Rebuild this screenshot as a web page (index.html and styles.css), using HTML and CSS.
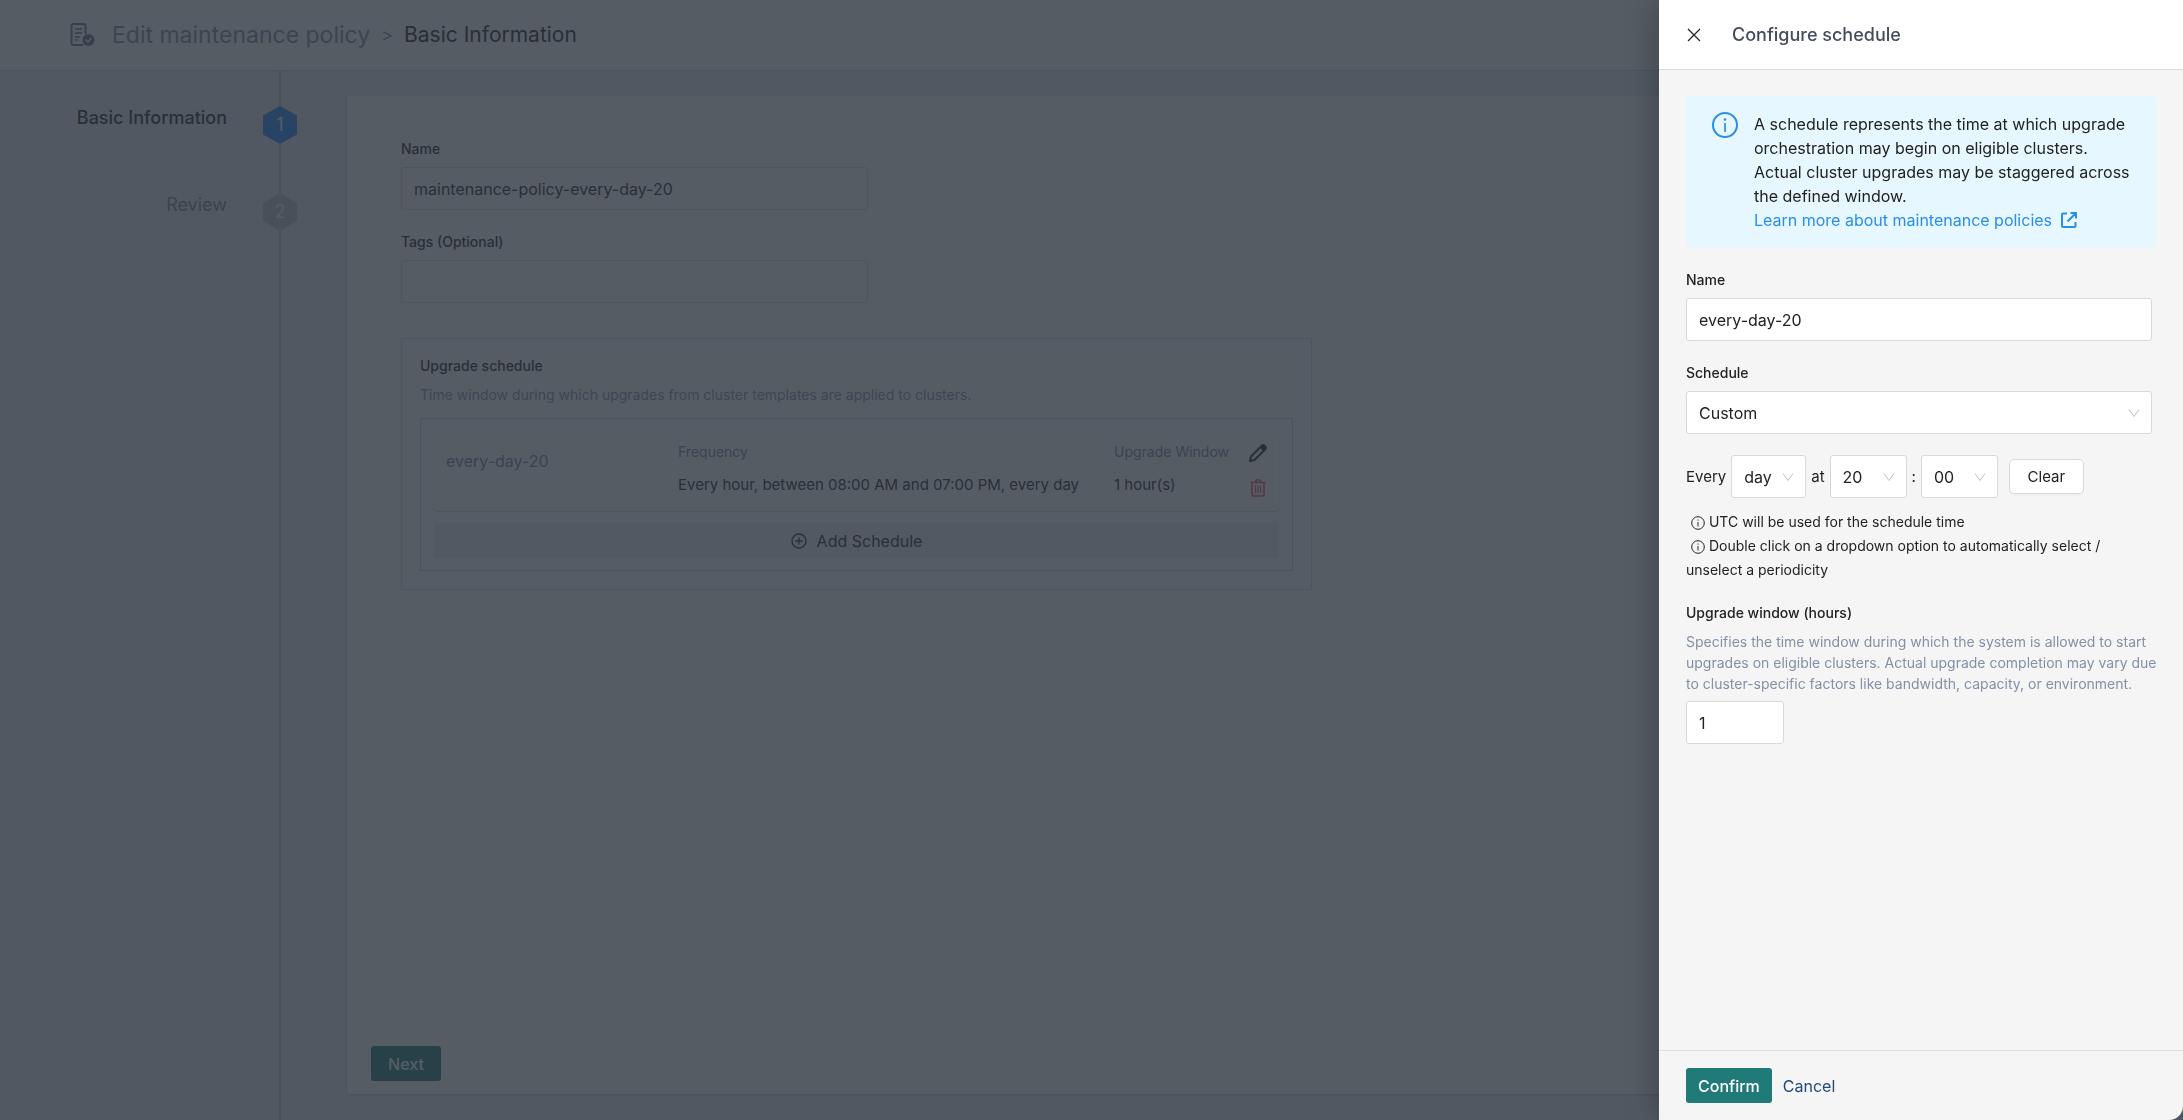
FILE: index.html
```
<!DOCTYPE html>
<html lang="en">
<head>
	<meta charset="utf-8">
	<title>Edit maintenance policy</title>
	<link rel="stylesheet" href="styles.css">
</head>
<body>
	<div class="page">
		<header class="topbar">
			<svg class="topbar-icon" viewBox="0 0 24 24" fill="none" stroke="currentColor" stroke-width="2" stroke-linecap="round" stroke-linejoin="round">
				<path d="M12 22H3a2 2 0 0 1-2-2V3a2 2 0 0 1 2-2h10a2 2 0 0 1 2 2v7"/>
				<path d="M5 6h6M5 10h6M5 14h4M5 17h2" stroke-width="1.6"/>
				<circle cx="18" cy="17" r="6" fill="currentColor" stroke="none"/>
				<path d="M15.500 17l2 2 3-3.500" class="icon-check"/>
			</svg>
			<h1 class="crumb">Edit maintenance policy</h1>
			<span class="crumb-sep">&gt;</span>
			<span class="crumb-current">Basic Information</span>
		</header>

		<div class="content">
			<ol class="steps">
				<li class="step active">
					<span class="step-name">Basic Information</span>
					<span class="step-hex">1</span>
				</li>
				<li class="step">
					<span class="step-name">Review</span>
					<span class="step-hex">2</span>
				</li>
			</ol>

			<main class="panel">
				<form class="policy-form">
					<div class="field">
						<label for="policy-name">Name</label>
						<input id="policy-name" class="text-input" type="text" value="maintenance-policy-every-day-20">
					</div>
					<div class="field">
						<label for="policy-tags">Tags (Optional)</label>
						<input id="policy-tags" class="text-input" type="text">
					</div>

					<section class="upgrade">
						<h2>Upgrade schedule</h2>
						<p class="hint">Time window during which upgrades from cluster templates are applied to clusters.</p>
						<div class="schedules">
							<div class="schedule-card">
								<div class="schedule-name">every-day-20</div>
								<div class="schedule-col">
									<span class="col-label">Frequency</span>
									<span>Every hour, between 08:00 AM and 07:00 PM, every day</span>
								</div>
								<div class="schedule-col">
									<span class="col-label">Upgrade Window</span>
									<span>1 hour(s)</span>
								</div>
								<div class="schedule-actions">
									<button type="button" class="icon-btn" aria-label="Edit">
										<svg viewBox="0 0 18 18" fill="none" stroke="currentColor" stroke-width="2" stroke-linejoin="round">
											<path d="M1 17l1-4.500L13 1.500q1.200-1 2.500.300l.700.700q1.200 1.200.200 2.500L5.500 16z"/>
											<path d="M11 3.500l2-2q1.500-1 2.800.400t.700 3l-2 2z" fill="currentColor" stroke-width="1"/>
										</svg>
									</button>
									<button type="button" class="icon-btn danger" aria-label="Delete">
										<svg viewBox="0 0 18 18" fill="none" stroke="currentColor" stroke-width="1.600" stroke-linecap="round" stroke-linejoin="round">
											<path d="M2 3.500h14M6 3.500l1-2.500h4l1 2.500M3 3.500V15a2 2 0 0 0 2 2h8a2 2 0 0 0 2-2V3.500"/>
											<path d="M6.500 7v6.500M9 7v6.500M11.500 7v6.500" stroke-width="1.200"/>
										</svg>
									</button>
								</div>
							</div>
							<button type="button" class="add-btn">
								<svg viewBox="0 0 16 16" fill="none" stroke="currentColor" stroke-width="1.300" stroke-linecap="round">
									<circle cx="8" cy="8" r="7"/>
									<path d="M8 5v6M5 8h6"/>
								</svg>
								Add Schedule
							</button>
						</div>
					</section>
				</form>
				<button type="button" class="btn-primary next">Next</button>
			</main>
		</div>
	</div>

	<div class="mask"></div>

	<aside class="drawer">
		<header class="drawer-header">
			<button type="button" class="close-btn" aria-label="Close">
				<svg viewBox="0 0 14 14" fill="none" stroke="currentColor" stroke-width="1.200">
					<path d="M1 1l12 12M13 1L1 13"/>
				</svg>
			</button>
			<h2>Configure schedule</h2>
		</header>

		<form class="drawer-body">
			<div class="alert">
				<svg class="alert-icon" viewBox="0 0 26 26" fill="none" stroke="currentColor" stroke-width="2">
					<circle cx="13" cy="13" r="12"/>
					<path d="M13 11v9" stroke-width="1.700"/>
					<circle cx="13" cy="7.500" r="1.300" fill="currentColor" stroke="none"/>
				</svg>
				<div>
					<p>A schedule represents the time at which upgrade<br>orchestration may begin on eligible clusters.<br>Actual cluster upgrades may be staggered across<br>the defined window.</p>
					<a href="#">Learn more about maintenance policies
						<svg viewBox="0 0 16 16" fill="none" stroke="currentColor" stroke-width="2">
							<path d="M6 1.500H2a1 1 0 0 0-1 1V14a1 1 0 0 0 1 1h11.500a1 1 0 0 0 1-1v-4M9.500 1H15v5.500M15 1L6.500 9.500"/>
						</svg>
					</a>
				</div>
			</div>

			<div class="field">
				<label for="schedule-name">Name</label>
				<input id="schedule-name" class="text-input" type="text" value="every-day-20">
			</div>
			<div class="field">
				<label for="schedule-type">Schedule</label>
				<span class="select-wrap">
					<select id="schedule-type"><option>Custom</option></select>
					<svg viewBox="0 0 12 8"><path d="M1 .500l5 7 5-7"/></svg>
				</span>
			</div>

			<div class="cron">
				<label for="period">Every</label>
				<span class="select-wrap period">
					<select id="period"><option>day</option></select>
					<svg viewBox="0 0 12 8"><path d="M1 .500l5 7 5-7"/></svg>
				</span>
				<label for="hour">at</label>
				<span class="select-wrap">
					<select id="hour"><option>20</option></select>
					<svg viewBox="0 0 12 8"><path d="M1 .500l5 7 5-7"/></svg>
				</span>
				<label for="minute">:</label>
				<span class="select-wrap">
					<select id="minute"><option>00</option></select>
					<svg viewBox="0 0 12 8"><path d="M1 .500l5 7 5-7"/></svg>
				</span>
				<button type="button" class="clear-btn">Clear</button>
			</div>

			<div class="notes">
				<p>
					<svg viewBox="0 0 14 14" fill="none" stroke="currentColor"><circle cx="7" cy="7" r="6.300"/><path d="M7 6v4.500M7 3.500v1.200"/></svg>
					UTC will be used for the schedule time
				</p>
				<p>
					<svg viewBox="0 0 14 14" fill="none" stroke="currentColor"><circle cx="7" cy="7" r="6.300"/><path d="M7 6v4.500M7 3.500v1.200"/></svg>
					Double click on a dropdown option to automatically select /<br>unselect a periodicity
				</p>
			</div>

			<div class="field window-field">
				<label for="window-hours">Upgrade window (hours)</label>
				<p class="hint">Specifies the time window during which the system is allowed to start<br>upgrades on eligible clusters. Actual upgrade completion may vary due<br>to cluster-specific factors like bandwidth, capacity, or environment.</p>
				<input id="window-hours" class="text-input" type="text" value="1">
			</div>
		</form>

		<footer class="drawer-footer">
			<button type="button" class="btn-primary">Confirm</button>
			<button type="button" class="btn-link">Cancel</button>
		</footer>
	</aside>
</body>
</html>
```
FILE: styles.css
```
*{
	box-sizing:border-box;
}
body,html{
	height:100%;
	margin:0;
}
body{
	background:#000;
	color:#222;
	font-family:Inter, "Open Sans", sans-serif;
	font-size:16px;
	line-height:24px;
	overflow:hidden;
}
h1,h2,p,ol{
	margin:0;
	padding:0;
	font-weight:400;
}
button,input,select{
	font:inherit;
	color:inherit;
}
button{
	cursor:pointer;
}
svg{
	flex:none;
}

/* page behind the drawer */
.page{
	display:flex;
	flex-direction:column;
	height:100%;
	background:#eaecf5;
}
.topbar{
	display:flex;
	align-items:center;
	height:71px;
	padding:0 70px;
	background:#fff;
	border-bottom:1px solid #d4d6dc;
}
.topbar-icon{
	width:25px;
	height:24px;
	margin-right:17px;
	color:#667085;
}
.icon-check{
	stroke:#fff;
	stroke-width:1.5;
}
.crumb{
	color:#7f88a0;
	font-size:23px;
}
.crumb-sep{
	margin:0 11px;
	color:#7f88a0;
	font-size:18px;
}
.crumb-current{
	font-size:21px;
}
.content{
	display:flex;
	flex:1;
}
.steps{
	position:relative;
	width:347px;
	padding-top:35px;
	list-style:none;
}
.steps:before{
	content:"";
	position:absolute;
	top:0;
	bottom:0;
	left:279px;
	width:2px;
	background:#c3c7d2;
}
.step{
	position:relative;
	display:flex;
	justify-content:flex-end;
	height:87px;
	padding-right:50px;
	color:#7d8086;
}
.step.active{
	color:#222;
}
.step-name{
	margin-right:36px;
	font-size:18px;
}
.active .step-name{
	font-weight:500;
}
.step-hex{
	width:34px;
	height:38px;
	background:#bfc3ca;
	clip-path:polygon(50% 0, 100% 25%, 100% 75%, 50% 100%, 0 75%, 0 25%);
	color:#fff;
	font-size:18px;
	line-height:38px;
	text-align:center;
}
.active .step-hex{
	background:#2080ff;
}
.panel{
	display:flex;
	flex-direction:column;
	flex:1;
	margin:25px 26px 26px 0;
	padding:41px 24px 13px;
	background:#fff;
	box-shadow:0 1px 2px rgba(0,0,0,.2);
}
.policy-form{
	width:941px;
	padding-left:30px;
}
.field{
	margin-bottom:20px;
}
.policy-form .field{
	width:497px;
	max-width:467px;
}
.field label,.upgrade h2{
	display:block;
	margin-bottom:6px;
	font-size:14px;
	font-weight:500;
}
.text-input,.select-wrap select{
	width:100%;
	height:43px;
	padding:0 12px;
	background:#fff;
	border:1px solid #d9d9d9;
	border-radius:3px;
}
.hint{
	color:#8490a6;
	font-size:14px;
	line-height:21px;
}
.upgrade{
	margin-top:35px;
	padding:15px 18px 18px;
	border:1px solid #d9d9e3;
}
.upgrade .hint{
	margin-bottom:13px;
}
.schedules{
	padding:12px 13px;
	border:1px solid #cfd2e0;
}
.schedule-card{
	display:flex;
	height:80px;
	margin-bottom:12px;
	padding:9px 12px;
	border-radius:4px;
	box-shadow:0 1px 2px rgba(0,0,0,.2);
}
.schedule-name{
	width:232px;
	padding-top:9px;
	color:#7481a0;
}
.schedule-col{
	display:flex;
	flex-direction:column;
	gap:9px;
	font-size:15px;
}
.schedule-col + .schedule-col{
	margin-left:auto;
	width:135px;
}
.col-label{
	color:#7481a0;
	font-size:14px;
}
.schedule-actions{
	display:flex;
	flex-direction:column;
	gap:17px;
	padding-top:4px;
}
.icon-btn,.close-btn{
	display:flex;
	padding:0;
	background:none;
	border:0;
}
.icon-btn svg{
	width:18px;
	height:18px;
}
.danger{
	color:#ff4d4f;
}
.add-btn{
	display:flex;
	align-items:center;
	justify-content:center;
	gap:10px;
	width:100%;
	height:35px;
	background:#f0f0f5;
	border:0;
	border-radius:3px;
}
.add-btn svg{
	width:16px;
	height:16px;
}
.btn-primary{
	height:35px;
	padding:0 12px;
	background:#1f7a78;
	border:0;
	border-radius:3px;
	color:#fff;
	font-weight:500;
}
.next{
	width:70px;
	margin-top:auto;
}
.mask{
	position:fixed;
	inset:0;
	background:rgba(42,51,61,.8);
}

/* drawer */
.drawer{
	position:fixed;
	top:0;
	right:0;
	bottom:0;
	display:flex;
	flex-direction:column;
	width:524px;
	background:#f5f5f5;
	border-bottom-right-radius:14px;
	box-shadow:-8px 0 28px rgba(0,0,0,.2);
}
.drawer-header{
	display:flex;
	align-items:center;
	gap:31px;
	height:70px;
	padding:0 28px;
	background:#fff;
	border-bottom:1px solid #dcdcdc;
}
.drawer-header h2{
	color:#454c5c;
	font-size:18px;
	font-weight:500;
}
.close-btn svg{
	width:14px;
	height:14px;
}
.drawer-body{
	flex:1;
	padding:26px 31px 0 27px;
}
.alert{
	display:flex;
	gap:16px;
	margin:0 -5px 20px 0;
	padding:16px 0 16px 26px;
	background:#e6f7ff;
	border-radius:3px;
}
.alert p{
	white-space:nowrap;
}
.alert a{
	color:#2a8ee8;
	text-decoration:none;
}
.alert a svg{
	width:16px;
	height:16px;
	margin-left:4px;
	vertical-align:-2px;
}
.alert-icon{
	width:26px;
	height:26px;
	color:#2a8ee8;
}
.select-wrap{
	position:relative;
	display:block;
}
.select-wrap select{
	appearance:none;
}
.select-wrap svg{
	position:absolute;
	top:18px;
	right:12px;
	width:12px;
	height:8px;
	fill:none;
	stroke:#bfbfbf;
	pointer-events:none;
}
.cron{
	display:flex;
	align-items:center;
	gap:5px;
	margin:21px 0 12px;
	font-size:15px;
}
.cron select{
	font-size:16px;
}
.cron .select-wrap{
	width:77px;
}
.cron .period{
	width:75px;
}
.clear-btn{
	width:75px;
	height:35px;
	margin-left:6px;
	padding:0;
	background:#fff;
	border:1px solid #d9d9d9;
	border-radius:5px;
	box-shadow:0 2px 0 rgba(0,0,0,.02);
}
.notes{
	margin-bottom:19px;
	font-size:14px;
}
.notes svg{
	width:14px;
	height:14px;
	margin-left:5px;
	vertical-align:-3px;
}
.window-field .hint{
	margin-bottom:7px;
	white-space:nowrap;
}
.window-field .text-input{
	width:98px;
}
.drawer-footer{
	display:flex;
	align-items:center;
	gap:11px;
	height:70px;
	padding:0 27px;
	border-top:1px solid #dcdfdf;
}
.btn-link{
	padding:0;
	background:none;
	border:0;
	color:#23497d;
}
```
